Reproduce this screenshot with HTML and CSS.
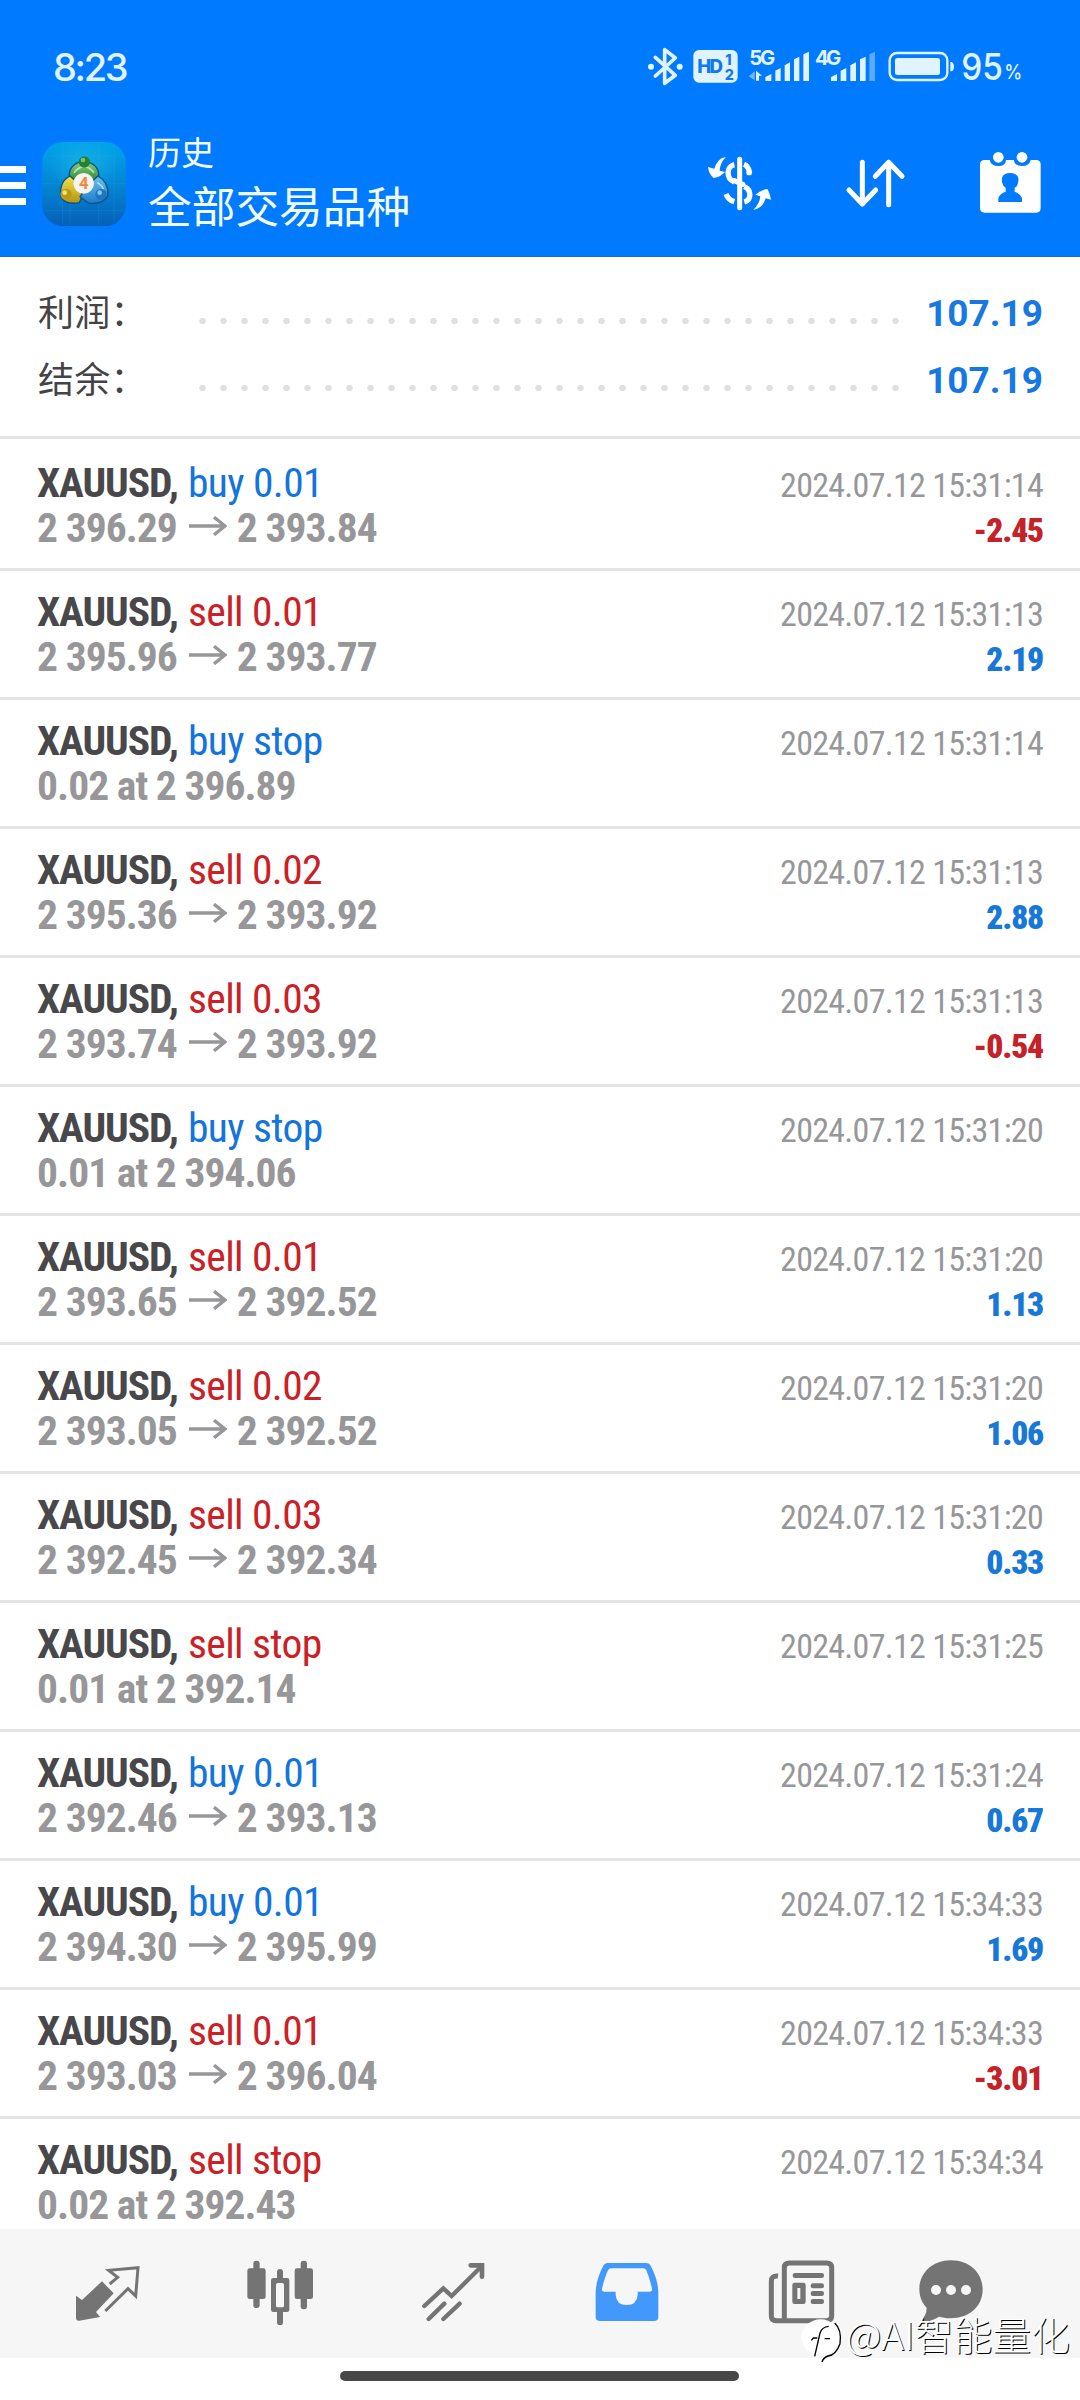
FILE: index.html
```html
<!DOCTYPE html>
<html lang="zh-CN">
<head>
<meta charset="utf-8">
<title>历史</title>
<link rel="stylesheet" href="styles.css">
</head>
<body>
<svg class="defs" width="0" height="0">
  <symbol id="arrow" viewBox="0 0 38 20"><path d="M0 10H36M25 1.2L36 10L25 18.8" fill="none" stroke="currentColor" stroke-width="3.4"/></symbol>
</svg>
<div class="screen">
  <header class="top">
    <div class="status">
      <span class="time">8:23</span>
      <svg class="status-icons" width="450" height="80" viewBox="0 0 1350 240">
        <g fill="none" stroke="#e0f3ff" stroke-width="11" stroke-linejoin="round" stroke-linecap="round">
          <path d="M76 82L136 136L104 160V59L136 84L76 138"/>
        </g>
        <g fill="#e0f3ff">
          <circle cx="63" cy="110" r="9"/><circle cx="149" cy="110" r="9"/>
          <rect x="190" y="60" width="133" height="98" rx="17"/>
        </g>
        <g class="hd"><text x="202" y="129" font-size="56" textLength="77">HD</text><text x="286" y="104" font-size="43">1</text><text x="284" y="149" font-size="43">2</text></g>
        <g class="net"><text x="358" y="106" textLength="78">5G</text><text x="555" y="106" textLength="79">4G</text></g>
        <g fill="#e0f3ff">
          <path d="M374 124v27l-18-12z" opacity=".5"/><path d="M378 152v-30l18 15h-9v15z"/>
          <path d="M406 141l18-9v21h-18zM436 122l16-8v39h-16zM464 106l16-9v56h-16zM492 88l16-8v73h-16zM520 73l17-8v88h-17z"/>
          <path d="M603 141l18-9v21h-18zM632 122l17-8v39h-17zM661 106l17-9v56h-17zM690 88l17-8v73h-17z"/>
          <path d="M718 73l17-8v88h-17z" opacity=".4"/>
          <rect x="795" y="84" width="135" height="51" rx="7"/>
          <path d="M961 96h4q7 3 7 14t-7 14h-4z"/>
        </g>
        <rect x="779" y="69" width="173" height="81" rx="22" fill="none" stroke="#e0f3ff" stroke-width="7"/>
        <text class="batt" x="994" y="151" font-size="112" textLength="125" lengthAdjust="spacingAndGlyphs">95</text>
        <text class="batt" x="1123" y="148" font-size="62" textLength="54" lengthAdjust="spacingAndGlyphs">%</text>
      </svg>
    </div>
    <div class="toolbar">
      <div class="menu"><i></i><i></i><i></i></div>
      <svg class="app" width="84" height="84" viewBox="24 24 252 252">
        <defs>
          <linearGradient id="bg" x1="0" y1="0" x2="0" y2="1"><stop offset="0" stop-color="#00a4ea"/><stop offset=".5" stop-color="#0486d3"/><stop offset="1" stop-color="#0560b8"/></linearGradient>
          <radialGradient id="glow"><stop offset="0" stop-color="#1fb8e8" stop-opacity=".7"/><stop offset="1" stop-color="#1fb8e8" stop-opacity="0"/></radialGradient>
          <linearGradient id="gr" x1="0" y1="0" x2="0" y2="1"><stop offset="0" stop-color="#8fd08a"/><stop offset="1" stop-color="#2a8c34"/></linearGradient>
          <linearGradient id="ye" x1="0" y1="0" x2="0" y2="1"><stop offset="0" stop-color="#f3e04a"/><stop offset="1" stop-color="#b39416"/></linearGradient>
          <linearGradient id="bl" x1="0" y1="0" x2="0" y2="1"><stop offset="0" stop-color="#6fc0f0"/><stop offset="1" stop-color="#1c7cc8"/></linearGradient>
        </defs>
        <rect x="25" y="24" width="250" height="252" rx="62" fill="url(#bg)"/>
        <ellipse cx="150" cy="90" rx="110" ry="80" fill="url(#glow)"/>
        <path d="M86 30V270M108 26V274M194 26V274M240 34V266M30 66H270M25 148H275M30 230H270" stroke="#4db8e8" stroke-width="2" opacity=".2"/>
        <g stroke="#08528a" stroke-width="4">
          <path d="M106 128Q102 92 150 80Q198 92 194 128L176 140L124 140Z" fill="url(#gr)"/>
          <path d="M108 126Q76 142 80 186Q92 214 136 206L146 184L124 140Z" fill="url(#ye)"/>
          <path d="M192 126Q224 144 222 184Q208 212 164 208L138 188L176 140Z" fill="url(#bl)"/>
        </g>
        <path d="M120 116Q150 80 180 116" fill="none" stroke="#b8e6ae" stroke-width="5"/>
        <path d="M190 146Q206 156 208 166" fill="none" stroke="#b6e2fa" stroke-width="5"/>
        <circle cx="151" cy="84" r="17" fill="#25822f"/><circle cx="147" cy="78" r="7" fill="#79bd76"/>
        <circle cx="96" cy="181" r="17" fill="#b89a1b"/><circle cx="92" cy="176" r="7" fill="#f2e376"/>
        <circle cx="201" cy="181" r="17" fill="#2177bd"/><circle cx="197" cy="176" r="7" fill="#83c7ee"/>
        <circle cx="149" cy="148" r="31" fill="#f6f3f0"/>
        <text x="149" y="166" class="four">4</text>
      </svg>
      <div class="titles"><span class="sub">历史</span><span class="main">全部交易品种</span></div>
      <svg class="actions" width="400" height="110" viewBox="0 0 1200 330" fill="none" stroke="#fff" stroke-linecap="round" stroke-linejoin="round">
        <path d="M179 88V233" stroke-width="15"/>
        <path d="M163 104C139 109 137 145 163 156M192 103Q205 108 209 128M193 170C215 180 215 210 193 216M138 192Q145 210 163 215" stroke-width="16" stroke-linecap="butt"/>
        <path d="M208 128h-1M188 163L163 152" stroke-width="16"/>
        <path d="M138 81Q112 84 103 116L84 111Q86 132 101 144Q120 142 135 126L119 122Q120 98 138 81ZM220 239Q248 236 257 205L273 209Q269 188 262 177Q243 180 226 194L241 199Q239 222 220 239Z" fill="#fff" stroke="none"/>
        <path d="M547 97V222M507 180L547 222L587 180M626 224V97M586 139L626 97L666 139" stroke-width="15"/>
        <g fill="#fff" stroke="none">
          <path fill-rule="evenodd" d="M914 90H929Q933 108 955 108Q977 108 978 90H1002Q1003 108 1026 108Q1048 108 1052 90H1069Q1082 90 1082 104V234Q1082 248 1069 248H914Q900 248 900 234V104Q900 90 914 90ZM955 216H1026V204Q1019 190 1004 185V173Q1012 170 1014 158Q1017 148 1014 141Q1008 129 990 129Q972 129 967 141Q964 150 967 159Q969 170 977 173V185Q960 190 955 204Z"/>
          <circle cx="955" cy="82" r="16"/><circle cx="1026" cy="82" r="16"/>
        </g>
      </svg>
    </div>
  </header>

  <section class="summary">
    <div class="sum"><span class="label">利润：</span><span class="dots"></span><b>107.19</b></div>
    <div class="sum"><span class="label">结余：</span><span class="dots"></span><b>107.19</b></div>
  </section>

  <main class="list">
    <div class="row"><div class="l1"><span><b>XAUUSD,</b><em class="buy">buy 0.01</em></span><time>2024.07.12 15:31:14</time></div><div class="l2"><span>2 396.29<svg class="arr"><use href="#arrow"/></svg>2 393.84</span><strong class="neg">-2.45</strong></div></div>
    <div class="row"><div class="l1"><span><b>XAUUSD,</b><em class="sell">sell 0.01</em></span><time>2024.07.12 15:31:13</time></div><div class="l2"><span>2 395.96<svg class="arr"><use href="#arrow"/></svg>2 393.77</span><strong class="pos">2.19</strong></div></div>
    <div class="row"><div class="l1"><span><b>XAUUSD,</b><em class="buy">buy stop</em></span><time>2024.07.12 15:31:14</time></div><div class="l2"><span>0.02 at 2 396.89</span></div></div>
    <div class="row"><div class="l1"><span><b>XAUUSD,</b><em class="sell">sell 0.02</em></span><time>2024.07.12 15:31:13</time></div><div class="l2"><span>2 395.36<svg class="arr"><use href="#arrow"/></svg>2 393.92</span><strong class="pos">2.88</strong></div></div>
    <div class="row"><div class="l1"><span><b>XAUUSD,</b><em class="sell">sell 0.03</em></span><time>2024.07.12 15:31:13</time></div><div class="l2"><span>2 393.74<svg class="arr"><use href="#arrow"/></svg>2 393.92</span><strong class="neg">-0.54</strong></div></div>
    <div class="row"><div class="l1"><span><b>XAUUSD,</b><em class="buy">buy stop</em></span><time>2024.07.12 15:31:20</time></div><div class="l2"><span>0.01 at 2 394.06</span></div></div>
    <div class="row"><div class="l1"><span><b>XAUUSD,</b><em class="sell">sell 0.01</em></span><time>2024.07.12 15:31:20</time></div><div class="l2"><span>2 393.65<svg class="arr"><use href="#arrow"/></svg>2 392.52</span><strong class="pos">1.13</strong></div></div>
    <div class="row"><div class="l1"><span><b>XAUUSD,</b><em class="sell">sell 0.02</em></span><time>2024.07.12 15:31:20</time></div><div class="l2"><span>2 393.05<svg class="arr"><use href="#arrow"/></svg>2 392.52</span><strong class="pos">1.06</strong></div></div>
    <div class="row"><div class="l1"><span><b>XAUUSD,</b><em class="sell">sell 0.03</em></span><time>2024.07.12 15:31:20</time></div><div class="l2"><span>2 392.45<svg class="arr"><use href="#arrow"/></svg>2 392.34</span><strong class="pos">0.33</strong></div></div>
    <div class="row"><div class="l1"><span><b>XAUUSD,</b><em class="sell">sell stop</em></span><time>2024.07.12 15:31:25</time></div><div class="l2"><span>0.01 at 2 392.14</span></div></div>
    <div class="row"><div class="l1"><span><b>XAUUSD,</b><em class="buy">buy 0.01</em></span><time>2024.07.12 15:31:24</time></div><div class="l2"><span>2 392.46<svg class="arr"><use href="#arrow"/></svg>2 393.13</span><strong class="pos">0.67</strong></div></div>
    <div class="row"><div class="l1"><span><b>XAUUSD,</b><em class="buy">buy 0.01</em></span><time>2024.07.12 15:34:33</time></div><div class="l2"><span>2 394.30<svg class="arr"><use href="#arrow"/></svg>2 395.99</span><strong class="pos">1.69</strong></div></div>
    <div class="row"><div class="l1"><span><b>XAUUSD,</b><em class="sell">sell 0.01</em></span><time>2024.07.12 15:34:33</time></div><div class="l2"><span>2 393.03<svg class="arr"><use href="#arrow"/></svg>2 396.04</span><strong class="neg">-3.01</strong></div></div>
    <div class="row"><div class="l1"><span><b>XAUUSD,</b><em class="sell">sell stop</em></span><time>2024.07.12 15:34:34</time></div><div class="l2"><span>0.02 at 2 392.43</span></div></div>
  </main>

  <nav class="nav">
    <svg width="193" height="129" viewBox="-180 27 579 387">
      <path d="M126 184L161 220L108 276L120 291L58 302Q48 303 48 293V227L66 240Z" fill="#747474"/>
      <path d="M149 192L173 172L146 151L234 143L227 228L204 206L136 273" fill="none" stroke="#747474" stroke-width="9"/>
    </svg>
    <svg width="173" height="129" viewBox="399 27 519 387" fill="#747474">
      <rect x="580" y="122" width="19" height="142" rx="9"/><rect x="562" y="145" width="55" height="92" rx="7"/>
      <rect x="722" y="122" width="19" height="146" rx="9"/><rect x="704" y="145" width="55" height="92" rx="7"/>
      <rect x="651" y="147" width="18" height="169" rx="9"/><rect x="633" y="174" width="55" height="102" rx="7"/>
      <rect x="648" y="189" width="24" height="73" rx="5" fill="#f6f6f6"/>
    </svg>
    <svg width="174" height="129" viewBox="918 27 522 387" fill="none" stroke="#747474" stroke-width="13" stroke-linecap="round" stroke-linejoin="miter">
      <path d="M1093 258L1150 205L1175 228L1262 142M1106 297L1153 251M1150 297L1199 251"/>
      <path d="M1232 136H1266V170" stroke-width="14"/>
    </svg>
    <svg width="174" height="129" viewBox="-120 27 522 387">
      <path fill="#4299fb" fill-rule="evenodd" d="M82 129H200Q208 129 212 137Q235 180 235 220V290Q235 303 222 303H60Q47 303 47 290V220Q47 180 70 137Q74 129 82 129ZM93 145Q87 145 84 151Q74 172 66 206Q64 215 73 215H107V225Q109 255 140 255Q171 255 173 225V215H208Q218 215 216 206Q208 172 199 151Q196 145 190 145Z"/>
    </svg>
    <svg width="162" height="129" viewBox="402 27 486 387">
      <path d="M594 168Q574 166 574 184V288Q574 302 588 302H740Q755 302 755 288V143Q755 129 740 129H628Q613 129 613 143V300" fill="none" stroke="#747474" stroke-width="15"/>
      <g fill="#747474"><rect x="638" y="159" width="94" height="15" rx="7"/><path fill-rule="evenodd" d="M644 188H670Q677 188 677 195V245Q677 252 670 252H644Q637 252 637 245V195Q637 188 644 188ZM652 204V237H661V204Z"/><rect x="692" y="190" width="40" height="15" rx="7"/><rect x="692" y="213" width="40" height="15" rx="7"/><rect x="692" y="237" width="40" height="15" rx="7"/></g>
    </svg>
    <svg width="204" height="129" viewBox="258 27 612 387">
      <path d="M483 121C540 121 578 160 578 208C578 262 535 295 483 295C467 295 455 292 447 290Q425 304 393 308Q388 306 392 301Q410 287 410 263C395 248 388 229 388 208C388 160 426 121 483 121Z" fill="#747474"/>
      <g fill="#f6f6f6"><circle cx="438" cy="210" r="15"/><circle cx="483" cy="210" r="15"/><circle cx="528" cy="210" r="15"/></g>
    </svg>
  </nav>
  <div class="home"><i></i></div>
  <div class="mark">
    <svg width="42" height="48" viewBox="35 295 126 144">
      <ellipse cx="94" cy="352" rx="58" ry="53" fill="#fff"/>
      <path d="M118 320Q98 322 92 340L76 410M66 362L72 355H84M106 357H122M136 310Q158 330 152 372Q140 406 116 409Q102 414 98 427" fill="none" stroke="#000" stroke-width="4"/>
    </svg>
    <span>@AI智能量化</span>
  </div>
</div>
</body>
</html>
```
FILE: styles.css
```css
* { box-sizing: border-box; }
body { margin: 0; background: #fff; }
.defs { display: block; position: absolute; }
.screen {
  position: relative;
  width: 1080px;
  height: 2400px;
  overflow: hidden;
  display: flex;
  flex-direction: column;
  font-family: "Roboto Condensed", Roboto, "Noto Sans CJK SC", sans-serif;
}
svg { display: block; flex: none; }
.top {
  flex: none;
  height: 257px;
  background: #007aff;
  border-bottom: 1px solid #1a6dc4;
  color: #f2fdff;
}
.status { display: flex; justify-content: space-between; height: 110px; padding: 30px 0 0 53px; }
.time {
  font: 500 38px/74px Inter, sans-serif;
  letter-spacing: -2.4px;
  color: #e0f3ff;
}
.hd text { font-family: Inter, sans-serif; font-weight: 800; fill: #0f7af0; }
.net text { font-family: Inter, sans-serif; font-weight: 700; font-size: 61px; fill: #e0f3ff; }
.batt { font-family: Inter, sans-serif; font-weight: 500; fill: #e0f3ff; }
.toolbar { display: flex; height: 146px; }
.menu { width: 26px; padding-top: 56px; display: flex; flex-direction: column; gap: 9px; }
.menu i { height: 7px; background: #fff; }
.app { margin: 32px 0 0 16px; }
.four { font: 700 50px Roboto, sans-serif; fill: #f0883a; text-anchor: middle; }
.titles {
  display: flex;
  flex-direction: column;
  padding: 18px 0 0 22px;
  font-family: "Noto Sans CJK SC", sans-serif;
}
.sub { font-size: 33px; line-height: 46px; }
.main { font-size: 43.7px; line-height: 60px; }
.actions { margin: 20px 0 0 auto; }

.summary { flex: none; height: 182px; padding: 21px 37px 0 38px; border-bottom: 3px solid #e4e4e4; }
.sum { display: flex; align-items: center; height: 67px; }
.label { width: 161px; margin-top: -4px; font: 36px/64px "Noto Sans CJK SC", sans-serif; letter-spacing: 0.3px; color: #444446; }
.dots {
  width: 700px;
  height: 8px;
  margin-top: 18px;
  background: radial-gradient(circle, #e0e0e0 2.9px, transparent 3.6px) -7px 0 / 21px 8px repeat-x;
}
.sum b {
  margin-left: auto;
  padding-top: 4px;
  font: 700 37px/44px Roboto, sans-serif;
  color: #1778e2;
}

.list { height: 1790px; overflow: hidden; padding-top: 3px; }
.row { height: 129px; padding: 18px 37px 0; border-bottom: 3px solid #e4e4e4; }
.l1, .l2 { display: flex; justify-content: space-between; align-items: baseline; height: 45px; line-height: 45px; font-size: 41.5px; white-space: nowrap; }
.l1 b { display: inline-block; width: 151px; letter-spacing: -1.1px; color: #48484b; }
.l1 em { font-style: normal; letter-spacing: -0.6px; }
.buy { color: #1274dc; }
.sell { color: #cb2026; }
.l2 { font-weight: 700; letter-spacing: -0.95px; color: #979799; }
.arr { display: inline-block; width: 38px; height: 20px; margin: 0 10px 0 12px; vertical-align: 6px; }
time { font-size: 34px; letter-spacing: -0.72px; color: #979799; }
strong { font-size: 33.5px; letter-spacing: -1.2px; }
.pos { color: #1778d8; }
.neg { color: #c42228; }

.nav { flex: none; display: flex; height: 129px; background: #f6f6f6; }
.home { height: 42px; padding-top: 13px; }
.home i { display: block; width: 399px; height: 10px; margin: 0 0 0 340px; border-radius: 5px; background: #474747; }
.mark {
  position: absolute;
  left: 801px;
  top: 2318px;
  display: flex;
  font: 300 38.8px/42px "Noto Sans CJK SC", sans-serif;
  color: #fff;
  text-shadow: 1px 1px 0 #000;
}
.mark span { margin-top: -6px; padding-left: 3px; white-space: nowrap; }
```
